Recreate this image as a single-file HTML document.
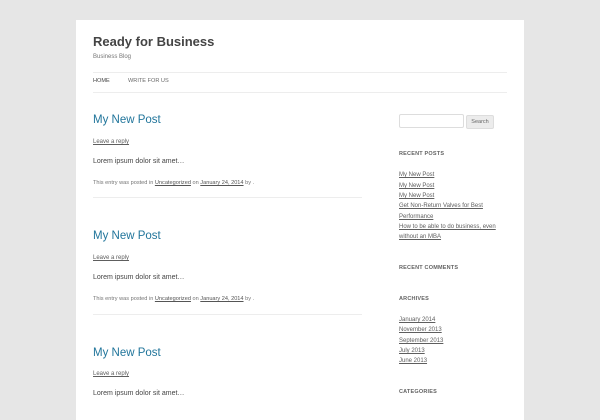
<!DOCTYPE html>
<html><head><style>
body{margin:0;background:#e6e6e6;width:600px;height:400px;overflow:hidden;font-family:"Liberation Sans",sans-serif;}
#p{position:absolute;left:76px;top:20px;width:448px;height:400px;background:#fff;}
.a{position:absolute;white-space:nowrap;line-height:1;}
.t{font-size:11.5px;color:#21759b;}
.s{font-size:6px;color:#5e5e5e;text-decoration:underline;}
.b{font-size:7px;color:#444;}
.m{font-size:5.6px;color:#757575;}
.m u{color:#555}
.h{font-size:5.5px;font-weight:bold;color:#636363;letter-spacing:.2px;}
.l{font-size:6px;color:#5e5e5e;text-decoration:underline;}
.hr{position:absolute;height:1px;background:#ededed;}
</style></head><body>
<div id="p"></div>
<div class="a" style="left:93px;top:35px;font-size:13px;font-weight:bold;color:#444;">Ready for Business</div>
<div class="a" style="left:93px;top:54px;font-size:6px;color:#757575;">Business Blog</div>
<div class="hr" style="left:93px;top:72px;width:414px"></div>
<div class="a" style="left:93px;top:79px;font-size:5.6px;color:#444;">HOME</div>
<div class="a" style="left:128px;top:79px;font-size:5.6px;color:#6a6a6a;">WRITE FOR US</div>
<div class="hr" style="left:93px;top:92px;width:414px"></div>

<div class="a t" style="left:93px;top:115px">My New Post</div>
<div class="a s" style="left:93px;top:139px">Leave a reply</div>
<div class="a b" style="left:93px;top:158px">Lorem ipsum dolor sit amet…</div>
<div class="a m" style="left:93px;top:181px">This entry was posted in <u>Uncategorized</u> on <u>January 24, 2014</u> by .</div>
<div class="hr" style="left:93px;top:197px;width:269px"></div>

<div class="a t" style="left:93px;top:231px">My New Post</div>
<div class="a s" style="left:93px;top:255px">Leave a reply</div>
<div class="a b" style="left:93px;top:274px">Lorem ipsum dolor sit amet…</div>
<div class="a m" style="left:93px;top:297px">This entry was posted in <u>Uncategorized</u> on <u>January 24, 2014</u> by .</div>
<div class="hr" style="left:93px;top:314px;width:269px"></div>

<div class="a t" style="left:93px;top:348px">My New Post</div>
<div class="a s" style="left:93px;top:371px">Leave a reply</div>
<div class="a b" style="left:93px;top:390px">Lorem ipsum dolor sit amet…</div>

<div style="position:absolute;left:399px;top:114px;width:63px;height:12px;border:1px solid #ddd;border-radius:2px;background:#fff"></div>
<div style="position:absolute;left:466px;top:115px;width:26px;height:12px;background:#ececec;border:1px solid #ddd;border-radius:2px;font-size:5.5px;color:#666;text-align:center;line-height:12px">Search</div>
<div class="a h" style="left:399px;top:152px">RECENT POSTS</div>
<div class="a l" style="left:399px;top:172px">My New Post</div>
<div class="a l" style="left:399px;top:183px">My New Post</div>
<div class="a l" style="left:399px;top:193px">My New Post</div>
<div class="a l" style="left:399px;top:203px">Get Non-Return Valves for Best</div>
<div class="a l" style="left:399px;top:214px">Performance</div>
<div class="a l" style="left:399px;top:224px">How to be able to do business, even</div>
<div class="a l" style="left:399px;top:234px">without an MBA</div>
<div class="a h" style="left:399px;top:266px">RECENT COMMENTS</div>
<div class="a h" style="left:399px;top:297px">ARCHIVES</div>
<div class="a l" style="left:399px;top:317px">January 2014</div>
<div class="a l" style="left:399px;top:327px">November 2013</div>
<div class="a l" style="left:399px;top:338px">September 2013</div>
<div class="a l" style="left:399px;top:348px">July 2013</div>
<div class="a l" style="left:399px;top:358px">June 2013</div>
<div class="a h" style="left:399px;top:390px">CATEGORIES</div>
</body></html>
